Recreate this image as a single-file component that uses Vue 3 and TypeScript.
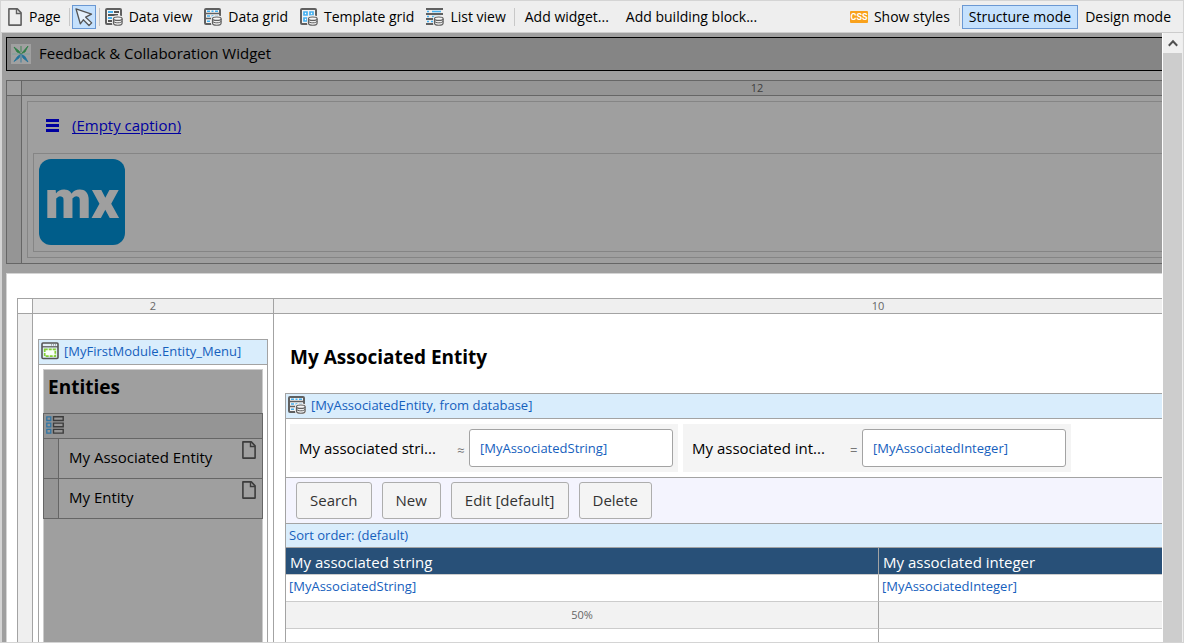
<script setup lang="ts">
import { ref } from 'vue'

interface WidgetTool {
  icon: string
  label: string
}

interface SearchField {
  id: string
  label: string
  operator: string
  value: string
}

const widgetTools: WidgetTool[] = [
  { icon: 'data-view', label: 'Data view' },
  { icon: 'data-grid', label: 'Data grid' },
  { icon: 'template-grid', label: 'Template grid' },
  { icon: 'list-view', label: 'List view' },
]

const searchFields = ref<SearchField[]>([
  { id: 'search-string', label: 'My associated stri...', operator: '≈', value: '[MyAssociatedString]' },
  { id: 'search-integer', label: 'My associated int...', operator: '=', value: '[MyAssociatedInteger]' },
])

const gridActions: string[] = ['Search', 'New', 'Edit [default]', 'Delete']
const menuItems: string[] = ['My Associated Entity', 'My Entity']
const mode = ref<'structure' | 'design'>('structure')
</script>

<template>
  <div class="editor">
    <svg class="sprite" aria-hidden="true">
      <symbol id="database" viewBox="0 0 18 18">
        <path d="M8 10.5v5c0 3 9.5 3 9.5 0v-5c0-3-9.5-3-9.5 0z" fill="#eee" stroke="#eee" stroke-width="2" />
        <path d="M8.5 10.7v4.6c0 2.6 8.6 2.6 8.6 0v-4.6" fill="#eee" stroke="#606060" stroke-width="1.2" />
        <ellipse cx="12.8" cy="10.7" rx="4.3" ry="1.7" fill="#f6f6f6" stroke="#606060" stroke-width="1.2" />
        <path d="M8.5 13c0 2.4 8.6 2.4 8.6 0" fill="none" stroke="#606060" />
      </symbol>
      <symbol id="data-view" viewBox="0 0 18 18">
        <rect x="1" y="1" width="15" height="15" rx="1" fill="#f3f3f3" stroke="#606060" stroke-width="2" />
        <path d="M3 4h5M3 10h4" stroke="#45b0ef" stroke-width="2" />
        <path d="M3 7h10M9 4h5M3 13h5" stroke="#555" stroke-width="2" />
        <use href="#database" />
      </symbol>
      <symbol id="data-grid" viewBox="0 0 18 18">
        <rect x="1" y="1" width="15" height="15" rx="1" fill="#f3f3f3" stroke="#606060" stroke-width="2" />
        <path d="M1 5.5h15M1 10.5h15" stroke="#606060" stroke-width="1.4" />
        <path d="M3 3.3h3M7.5 3.3h2M11 3.3h3M3 8h3M7.5 8h2M11 8h3M3 13.2h3" stroke="#45b0ef" stroke-width="1.4" />
        <use href="#database" />
      </symbol>
      <symbol id="template-grid" viewBox="0 0 18 18">
        <rect x="1" y="1" width="15" height="15" rx="1" fill="#f3f3f3" stroke="#606060" stroke-width="2" />
        <path d="M4 4h3v3H4zM10 4h3v3h-3zM4 10h3v3H4zM10 10h3v3h-3z" fill="#fff" stroke="#45b0ef" stroke-width="1.7" />
        <use href="#database" />
      </symbol>
      <symbol id="list-view" viewBox="0 0 18 18">
        <path d="M0 1h17M0 6h17M0 11h9M0 16h8" stroke="#606060" stroke-width="1.8" />
        <path d="M1 3.5h2M6 3.5h9M1 8.5h2M6 8.5h9M1 13.5h2M5 13.5h3" stroke="#45b0ef" stroke-width="1.5" />
        <use href="#database" />
      </symbol>
      <symbol id="page" viewBox="0 0 14 18">
        <path d="M0.9 0.9h8.4l3.8 4v12.2H0.9z" fill="none" stroke="currentColor" stroke-width="1.6" stroke-linejoin="round" />
        <path d="M8.5 1v4.5h4.5" fill="none" stroke="currentColor" stroke-width="1.4" />
      </symbol>
    </svg>

    <header class="toolbar">
      <button type="button" class="tool tool-page">
        <svg class="icon-page"><use href="#page" /></svg>Page
      </button>
      <span class="divider"></span>
      <button type="button" class="tool pointer active" aria-label="Select">
        <svg viewBox="0 0 22 22" aria-hidden="true">
          <path d="M3 2.8l15.5 5.4-5.8 3 6 5.7-2.7 2.6-5.7-5.7-3 4z" fill="#e6f1fb" stroke="#555" stroke-width="1.3" stroke-linejoin="round" />
        </svg>
      </button>
      <span class="divider"></span>
      <button v-for="tool in widgetTools" :key="tool.icon" type="button" class="tool widget-tool">
        <svg class="icon"><use :href="'#' + tool.icon" /></svg>{{ tool.label }}
      </button>
      <span class="divider"></span>
      <button type="button" class="tool text-tool">Add widget...</button>
      <button type="button" class="tool text-tool">Add building block...</button>
      <span class="spacer"></span>
      <button type="button" class="tool styles-tool">
        <svg class="icon-css" viewBox="0 0 18 12" aria-hidden="true">
          <rect width="18" height="12" rx="1" fill="#f9a11b" />
          <text x="9" y="9" text-anchor="middle">CSS</text>
        </svg>Show styles
      </button>
      <span class="divider"></span>
      <button type="button" class="tool mode" :class="{ active: mode === 'structure' }" @click="mode = 'structure'">Structure mode</button>
      <button type="button" class="tool mode" :class="{ active: mode === 'design' }" @click="mode = 'design'">Design mode</button>
    </header>

    <div class="workspace">
      <main class="canvas">
        <div class="surface">
          <section class="feedback">
            <svg viewBox="0 0 20 20" aria-hidden="true">
              <rect width="20" height="20" fill="#a0a0a0" />
              <path d="M3 3l5 4 1.5 2.5L6 8zM17 2l-6.5 7.5L14 8zM10 2v6" fill="#2f7d46" stroke="#2f7d46" stroke-width="0.8" />
              <path d="M1 10h7M12 10h7" stroke="#7f9f99" stroke-width="1.2" />
              <path d="M3 17.5l3.5-5L9.5 10.5 8 14zM17 18l-3-5.5-3.5-2L12 14zM10 12v6.5" fill="#23739b" stroke="#23739b" stroke-width="0.8" />
            </svg>
            <span>Feedback &amp; Collaboration Widget</span>
          </section>

          <section class="layout-grid dimmed">
            <div class="corner"></div>
            <div class="ruler">12</div>
            <div class="gutter"></div>
            <div class="top-column">
              <div class="container">
                <div class="caption-row">
                  <svg viewBox="0 0 13 13" aria-hidden="true"><path d="M0 1.5h13M0 6.5h13M0 11.5h13" stroke="#0000a0" stroke-width="3" /></svg>
                  <a href="#">(Empty caption)</a>
                </div>
                <div class="logo-row">
                  <svg class="logo" viewBox="0 0 86 86" role="img" aria-label="mx">
                    <rect width="86" height="86" rx="12" fill="#005d8a" />
                    <text x="43" y="59" text-anchor="middle">mx</text>
                  </svg>
                </div>
              </div>
            </div>
          </section>

          <section class="sheet">
            <div class="layout-grid split">
              <div class="corner"></div>
              <div class="ruler">2</div>
              <div class="ruler">10</div>
              <div class="gutter"></div>

              <aside class="side-column">
                <div class="snippet">
                  <div class="source">
                    <svg class="icon" viewBox="0 0 18 18" aria-hidden="true">
                      <rect x="1" y="1" width="16" height="15.5" rx="1" fill="#e4f0f8" stroke="#555" stroke-width="1.6" />
                      <path d="M1 4.8h16" stroke="#555" stroke-width="1.2" />
                      <path d="M10 2.9h5" stroke="#777" stroke-dasharray="1 1" />
                      <rect x="3.7" y="7.3" width="10.6" height="6.8" fill="#fbfffa" stroke="#84cf36" stroke-width="1.7" stroke-dasharray="3 1" />
                    </svg>
                    <span>[MyFirstModule.Entity_Menu]</span>
                  </div>
                  <div class="snippet-body">
                    <h2>Entities</h2>
                    <div class="menu">
                      <div class="menu-head">
                        <svg class="icon" viewBox="0 0 18 18" aria-hidden="true">
                          <path d="M0.8 0.8h4v3.7h-4zM0.8 7.1h4v3.7h-4zM0.8 13.4h4v3.7h-4z" fill="none" stroke="#2f74a3" stroke-width="1.3" />
                          <path d="M7.5 0.8h9.7v3.7H7.5zM7.5 7.1h9.7v3.7H7.5zM7.5 13.4h9.7v3.7H7.5z" fill="none" stroke="#3c3c3c" stroke-width="1.4" />
                        </svg>
                      </div>
                      <ul>
                        <li v-for="item in menuItems" :key="item">
                          <span>{{ item }}</span>
                          <svg class="icon-page" aria-hidden="true"><use href="#page" /></svg>
                        </li>
                      </ul>
                    </div>
                  </div>
                </div>
              </aside>

              <div class="main-column">
                <h1>My Associated Entity</h1>
                <div class="datagrid">
                  <div class="source">
                    <svg class="icon" aria-hidden="true"><use href="#data-grid" /></svg>
                    <span>[MyAssociatedEntity, from database]</span>
                  </div>
                  <div class="search-bar">
                    <div v-for="field in searchFields" :key="field.id" class="search-field">
                      <label :for="field.id">{{ field.label }}</label>
                      <span class="operator">{{ field.operator }}</span>
                      <input :id="field.id" v-model="field.value" type="text" />
                    </div>
                  </div>
                  <div class="actions">
                    <button v-for="action in gridActions" :key="action" type="button">{{ action }}</button>
                  </div>
                  <div class="sort-order">Sort order: (default)</div>
                  <table>
                    <thead>
                      <tr><th>My associated string</th><th>My associated integer</th></tr>
                    </thead>
                    <tbody>
                      <tr><td>[MyAssociatedString]</td><td>[MyAssociatedInteger]</td></tr>
                      <tr class="widths"><td>50%</td><td></td></tr>
                      <tr class="blank"><td></td><td></td></tr>
                    </tbody>
                  </table>
                </div>
              </div>
            </div>
          </section>
        </div>
      </main>
      <div class="scrollbar">
        <button type="button" aria-label="Scroll up">
          <svg viewBox="0 0 10 8" aria-hidden="true"><path d="M0.8 6.7L5 2.2l4.2 4.5" fill="none" stroke="#505050" stroke-width="2" /></svg>
        </button>
        <div class="thumb"></div>
      </div>
    </div>
  </div>
</template>

<style>
body {
  margin: 0;
}
</style>

<style scoped>
*,
*::before {
  box-sizing: border-box;
}

.editor {
  display: flex;
  flex-direction: column;
  height: 100vh;
  overflow: hidden;
  border: 1px solid #d4d4d4;
  background: #eee;
  color: #000;
  font-family: "Open Sans", "Noto Sans", sans-serif;
  font-size: 15px;
  line-height: 20px;
}

.sprite {
  position: absolute;
  width: 0;
  height: 0;
}

svg {
  display: block;
  flex: none;
}

.icon {
  width: 18px;
  height: 18px;
}

.icon-page {
  width: 14px;
  height: 18px;
}

button {
  margin: 0;
  padding: 0;
  font: inherit;
  color: inherit;
}

/* Toolbar */
.toolbar {
  display: flex;
  flex: none;
  align-items: center;
  height: 32px;
  padding: 0 5px 0 6px;
  border-bottom: 1px solid #ccc;
  background: #eee;
  font-size: 14px;
  white-space: nowrap;
}

.tool {
  display: flex;
  align-items: center;
  gap: 6px;
  height: 24px;
  border: 1px solid transparent;
  background: transparent;
}

.tool .icon-page {
  color: #606060;
}

.tool-page {
  gap: 7px;
  margin-right: 7px;
}

.tool.active {
  border-color: #6a98d3;
  background: #c5e1fd;
}

.pointer {
  width: 24px;
  margin: 0 3px 0 2px;
}

.pointer svg {
  width: 22px;
  height: 22px;
}

.widget-tool {
  margin: 0 6px 0 4px;
}

.text-tool {
  margin: 0 5px 0 9px;
}

.widget-tool + .divider {
  margin-left: 1px;
}

.text-tool + .text-tool {
  margin-left: 10px;
}

.styles-tool {
  margin-right: 8px;
}

.mode {
  padding: 0 6px;
}

.divider {
  width: 1px;
  height: 18px;
  background: #c8c8c8;
}

.divider + .mode {
  margin-left: 2px;
}

.spacer {
  flex: 1;
}

.icon-css {
  width: 18px;
  height: 12px;
}

.icon-css text {
  fill: #fff;
  font: bold 9px Roboto, "Liberation Sans", sans-serif;
}

/* Canvas */
.workspace {
  display: flex;
  flex: 1;
  min-height: 0;
}

.canvas {
  flex: 1;
  min-width: 0;
  overflow: hidden;
  padding: 4px 0 0 4px;
  border-left: 1px solid #d4d4d4;
  background: #9f9f9f;
}

.surface {
  display: flex;
  flex-direction: column;
  width: calc(100% + 331px);
  height: 100%;
}

.feedback {
  display: flex;
  align-items: center;
  gap: 8px;
  height: 34px;
  flex: none;
  padding-left: 4px;
  border: 1px solid #000;
  background: #858585;
}

.feedback svg {
  width: 20px;
  height: 20px;
}

.feedback span {
  padding-bottom: 2px;
}

.layout-grid {
  display: grid;
  border: 1px solid #a3a3a3;
}

.corner,
.ruler {
  height: 15px;
  border-bottom: 1px solid #a3a3a3;
}

.ruler {
  border-left: 1px solid #a3a3a3;
  background: #efefef;
  color: #666;
  font-size: 11px;
  line-height: 14px;
  text-align: center;
}

.gutter {
  background: #efefef;
}

.dimmed {
  flex: none;
  grid-template-columns: 14px 1fr;
  margin-top: 9px;
  border-color: #666;
}

.dimmed .corner,
.dimmed .ruler {
  border-color: #666;
}

.dimmed .ruler,
.dimmed .gutter {
  background: #959595;
}

.dimmed .ruler {
  color: #404040;
}

.top-column {
  padding: 5px;
  border-left: 1px solid #666;
}

.container {
  padding: 5px;
  border: 1px solid #858585;
}

.caption-row {
  display: flex;
  align-items: center;
  gap: 13px;
  height: 46px;
  padding: 0 13px 10px;
}

.caption-row svg {
  width: 13px;
  height: 13px;
}

.caption-row a {
  color: #0000a0;
  text-underline-offset: 2px;
}

.logo-row {
  padding: 5px 5px 6px;
  border: 1px solid #858585;
}

.logo {
  width: 86px;
  height: 86px;
}

.logo text {
  fill: #9f9f9f;
  font: 900 54px Roboto, "Liberation Sans", sans-serif;
}

/* White sheet */
.sheet {
  display: flex;
  flex: 1;
  min-height: 0;
  margin-top: 9px;
  padding: 24px 9px 0 10px;
  border: 1px solid #d4d4d4;
  border-bottom: 0;
  background: #fff;
}

.split {
  flex: 1;
  grid-template-columns: 14px 241px 1fr;
  grid-template-rows: 15px 1fr;
  border-bottom: 0;
}

.side-column {
  display: flex;
  padding: 25px 5px 0;
  border-left: 1px solid #a3a3a3;
}

.snippet {
  display: flex;
  flex: 1;
  flex-direction: column;
  border: 1px solid #a3a3a3;
  border-bottom: 0;
}

.source {
  display: flex;
  align-items: center;
  gap: 5px;
  height: 25px;
  padding: 0 0 2px 2px;
  border-bottom: 1px solid #a3a3a3;
  background: #d9edfc;
  color: #1560bd;
  font-size: 13px;
  white-space: nowrap;
}

.snippet-body {
  flex: 1;
  margin: 4px 4px 0;
  border: 1px solid #ccc;
  border-bottom: 0;
  background: #9f9f9f;
}

h1,
h2 {
  margin: 0;
  font-size: 19px;
  font-weight: 700;
  line-height: 26px;
}

h2 {
  padding: 4px 4px 13px;
}

.menu {
  margin: 0 -1px;
  border: 1px solid #666;
  background: #959595;
}

.menu-head {
  height: 24px;
  padding: 2px;
}

.menu ul {
  margin: 0;
  padding: 0;
  list-style: none;
}

.menu li {
  display: flex;
  align-items: flex-start;
  height: 40px;
  padding-right: 6px;
  border-top: 1px solid #666;
  background: #9f9f9f;
}

.menu li::before {
  content: "";
  align-self: stretch;
  width: 15px;
  border-right: 1px solid #666;
  background: #959595;
}

.menu li span {
  flex: 1;
  padding: 8px 0 0 10px;
}

.menu .icon-page {
  margin-top: 2px;
  color: #3c3c3c;
}

.main-column {
  display: flex;
  flex-direction: column;
  min-width: 0;
  padding: 30px 11px 0;
  border-left: 1px solid #a3a3a3;
}

h1 {
  padding: 0 5px 23px;
}

.datagrid {
  flex: 1;
  border: 1px solid #a3a3a3;
  border-bottom: 0;
}

.search-bar {
  display: flex;
  gap: 5px;
  padding: 5px 4px;
  border-bottom: 1px solid #a3a3a3;
}

.search-field {
  display: flex;
  align-items: center;
  width: 388px;
  height: 48px;
  padding: 0 5px 0 9px;
  background: #f4f4f4;
}

.search-field label {
  flex: 1;
  white-space: nowrap;
}

.operator {
  width: 12px;
  padding-top: 4px;
  color: #777;
  font-size: 13px;
}

.search-field input {
  width: 204px;
  height: 38px;
  padding: 0 10px;
  border: 1px solid #a3a3a3;
  border-radius: 3px;
  background: #fff;
  color: #1560bd;
  font: inherit;
  font-size: 13px;
}

.actions {
  display: flex;
  gap: 10px;
  padding: 4px 10px;
  border-bottom: 1px solid #a3a3a3;
  background: #f4f4fe;
}

.actions button {
  height: 37px;
  padding: 0 13px 2px;
  border: 1px solid #adadad;
  border-radius: 3px;
  background: #f4f4f4;
  color: #333;
}

.sort-order {
  height: 24px;
  padding-left: 3px;
  border-bottom: 1px solid #a3a3a3;
  background: #d9edfc;
  color: #1560bd;
  font-size: 13px;
  line-height: 22px;
}

table {
  width: 100%;
  table-layout: fixed;
  border-spacing: 0;
}

th,
td {
  height: 27px;
  padding: 0 3px;
  border-bottom: 1px solid #ccc;
  text-align: left;
}

th {
  padding: 2px 4px 0;
  background: #285078;
  color: #fff;
  font-weight: 400;
}

th + th,
td + td {
  border-left: 1px solid #a3a3a3;
}

td {
  color: #1560bd;
  font-size: 13px;
  padding-bottom: 4px;
}

.widths td {
  padding-bottom: 0;
  background: #f2f2f2;
  color: #666;
  font-size: 11px;
  text-align: center;
}

.blank td {
  height: 20px;
  border-bottom: 0;
}

/* Scrollbar */
.scrollbar {
  display: flex;
  flex: none;
  flex-direction: column;
  width: 21px;
  border-left: 1px solid #fff;
  border-right: 1px solid #eee;
  background: #f0f0f0;
}

.scrollbar button {
  display: flex;
  align-items: center;
  justify-content: center;
  height: 20px;
  border: 0;
  background: #f0f0f0;
}

.scrollbar svg {
  width: 10px;
  height: 8px;
}

.thumb {
  flex: 1;
  background: #cdcdcd;
}
</style>
